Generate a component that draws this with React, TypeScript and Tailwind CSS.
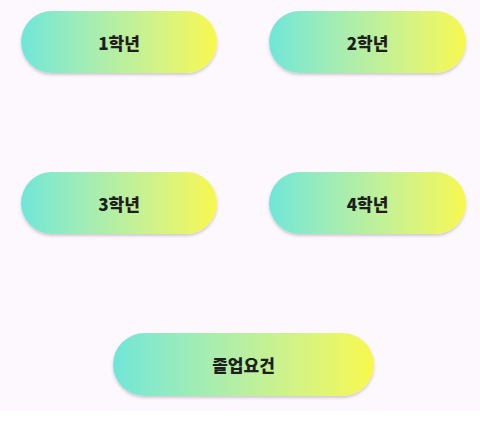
import React from "react";

function Btn({ label, w, h }: { label: string; w: string; h: string }) {
  return (
    <div
      className={`${w} ${h} rounded-full bg-gradient-to-r from-[#6fe6d8] via-[#b8efa0] to-[#f8f849] shadow-[0_2px_3px_rgba(80,60,80,0.25)] flex items-center justify-center`}
    >
      <span
        className="text-[17px] font-black text-[#1e1e1e] leading-none"
        style={{ fontFamily: '"Noto Sans CJK KR", "Noto Sans", sans-serif' }}
      >
        {label}
      </span>
    </div>
  );
}

export default function App() {
  return (
    <div className="w-[480px] h-[421px] bg-white">
      <div className="w-[480px] h-[411px] bg-[#fdf8fd] flex flex-col pt-[11px]">
        <div className="flex pl-[21px] gap-[52px]">
          <Btn label="1학년" w="w-[196px]" h="h-[62px]" />
          <Btn label="2학년" w="w-[197px]" h="h-[62px]" />
        </div>
        <div className="flex pl-[21px] gap-[52px] mt-[99px]">
          <Btn label="3학년" w="w-[196px]" h="h-[62px]" />
          <Btn label="4학년" w="w-[197px]" h="h-[62px]" />
        </div>
        <div className="flex pl-[113px] mt-[99px]">
          <Btn label="졸업요건" w="w-[261px]" h="h-[63px]" />
        </div>
      </div>
    </div>
  );
}
